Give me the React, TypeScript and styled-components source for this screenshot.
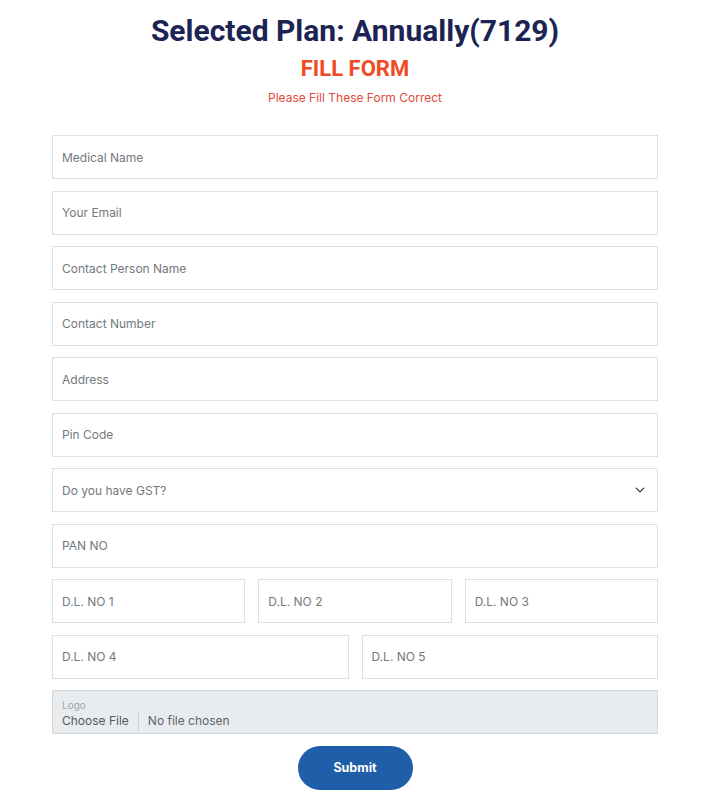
import React from "react";
import styled, { createGlobalStyle } from "styled-components";

const Global = createGlobalStyle`
  html, body { margin: 0; padding: 0; background: #ffffff; }
  body { font-family: Inter, "Noto Sans", sans-serif; }
  * { box-sizing: border-box; }
`;

const Page = styled.div`
  width: 713px;
  padding: 12px 55px 20px 52px;
`;

const Header = styled.div`
  display: flex;
  flex-direction: column;
  align-items: center;
  margin-bottom: 29px;
`;

const Title = styled.h1`
  margin: 0;
  font-family: Roboto, "Liberation Sans", sans-serif;
  font-weight: 700;
  font-size: 30px;
  line-height: 38px;
  color: #1b2453;
`;

const SubTitle = styled.h2`
  margin: 5px 0 0;
  font-family: Roboto, "Liberation Sans", sans-serif;
  font-weight: 700;
  font-size: 22px;
  line-height: 28px;
  color: #f04a25;
`;

const Note = styled.p`
  margin: 7px 0 0;
  font-size: 12px;
  line-height: 16px;
  color: #e04b3a;
`;

const Form = styled.form`
  display: flex;
  flex-direction: column;
  gap: 11.5px;
`;

const Row = styled.div<{ $cols: number }>`
  display: grid;
  grid-template-columns: repeat(${(p) => p.$cols}, 1fr);
  gap: 13px;
`;

const Field = styled.div`
  height: 44px;
  border: 1px solid #dcdfe3;
  background: #fff;
  display: flex;
  align-items: center;
  padding: 0 9px;
  font-size: 12px;
  color: #75787c;
`;

const Select = styled(Field)`
  justify-content: space-between;
  padding-right: 12px;
`;

const FileField = styled.div`
  height: 44px;
  border: 1px solid #d6d9dc;
  background: #e9ecef;
  display: flex;
  flex-direction: column;
  justify-content: center;
  padding: 5px 9px 0;
`;

const FileLabel = styled.span`
  font-size: 10px;
  line-height: 12px;
  color: #a0a4a8;
`;

const FileLine = styled.div`
  display: flex;
  align-items: center;
  font-size: 12px;
  line-height: 20px;
  color: #5f6368;
`;

const FileBtn = styled.span`
  padding-right: 9px;
  margin-right: 9px;
  border-right: 1px solid #cfd3d7;
  color: #55595e;
`;

const SubmitWrap = styled.div`
  display: flex;
  justify-content: center;
`;

const Submit = styled.button`
  width: 115px;
  height: 44px;
  border: none;
  border-radius: 22px;
  background: #1f5ea8;
  color: #fff;
  font-family: Inter, "Noto Sans", sans-serif;
  font-weight: 700;
  font-size: 12.5px;
`;

const Chevron = () => (
  <svg width="10" height="10" viewBox="0 0 16 16" fill="none">
    <path d="M2 5l6 6 6-6" stroke="#343a40" strokeWidth="2" strokeLinecap="round" strokeLinejoin="round" />
  </svg>
);

export default function App() {
  return (
    <Page>
      <Global />
      <Header>
        <Title>Selected Plan: Annually(7129)</Title>
        <SubTitle>FILL FORM</SubTitle>
        <Note>Please Fill These Form Correct</Note>
      </Header>
      <Form>
        <Field>Medical Name</Field>
        <Field>Your Email</Field>
        <Field>Contact Person Name</Field>
        <Field>Contact Number</Field>
        <Field>Address</Field>
        <Field>Pin Code</Field>
        <Select>
          <span>Do you have GST?</span>
          <Chevron />
        </Select>
        <Field>PAN NO</Field>
        <Row $cols={3}>
          <Field>D.L. NO 1</Field>
          <Field>D.L. NO 2</Field>
          <Field>D.L. NO 3</Field>
        </Row>
        <Row $cols={2}>
          <Field>D.L. NO 4</Field>
          <Field>D.L. NO 5</Field>
        </Row>
        <FileField>
          <FileLabel>Logo</FileLabel>
          <FileLine>
            <FileBtn>Choose File</FileBtn>
            <span>No file chosen</span>
          </FileLine>
        </FileField>
        <SubmitWrap>
          <Submit type="button">Submit</Submit>
        </SubmitWrap>
      </Form>
    </Page>
  );
}
